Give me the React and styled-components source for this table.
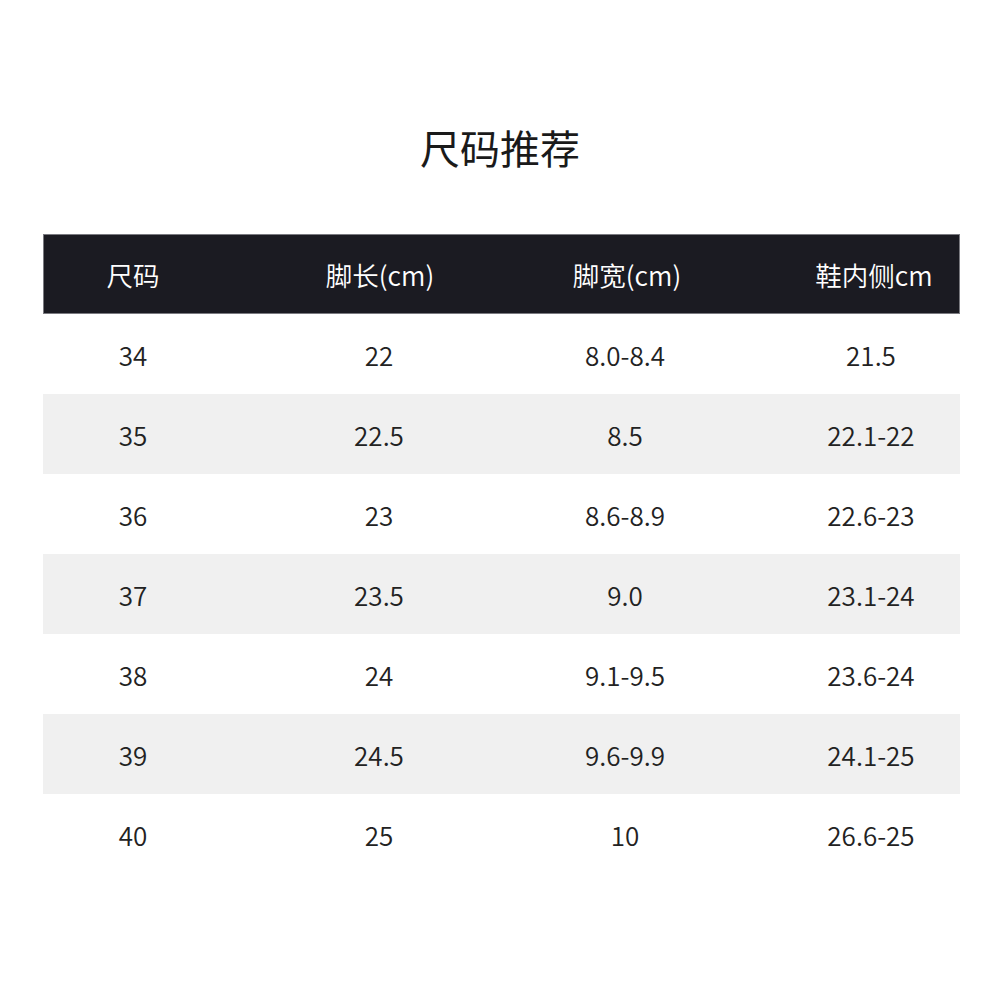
import React from "react";
import styled, { createGlobalStyle } from "styled-components";

const Global = createGlobalStyle`
  html, body { margin: 0; padding: 0; background: #fff; }
  body { font-family: "Noto Sans CJK SC", "Noto Sans", sans-serif; color: #222; }
`;

const Page = styled.div`
  width: 1000px;
  height: 1000px;
  padding-top: 117px;
  box-sizing: border-box;
`;

const Title = styled.h1`
  margin: 0 0 57px;
  font-size: 40px;
  line-height: 60px;
  font-weight: 400;
  text-align: center;
  color: #1a1a1a;
`;

const Table = styled.div`
  margin-left: 43px;
  width: 917px;
`;

const Row = styled.div`
  display: grid;
  grid-template-columns: repeat(4, 120px);
  column-gap: 126px;
  padding-left: 30px;
  height: 80px;
  align-items: center;
  box-sizing: border-box;
  background: ${(p) => (p.$shade ? "#f0f0f0" : "#fff")};
`;

const HeaderRow = styled(Row)`
  background: #1b1b22;
  border: 1px solid #7a7a80;
  color: #fff;
  padding-left: 29px;
  column-gap: 127px;
`;

const Cell = styled.div`
  text-align: center;
  white-space: nowrap;
  font-size: ${(p) => (p.$head ? "26.5px" : "26px")};
  font-weight: 350;
  justify-self: center;
  color: ${(p) => (p.$head ? "#fff" : "#222")};
`;

const head = ["尺码", "脚长(cm)", "脚宽(cm)", "鞋内侧cm"];
const rows = [
  ["34", "22", "8.0-8.4", "21.5"],
  ["35", "22.5", "8.5", "22.1-22"],
  ["36", "23", "8.6-8.9", "22.6-23"],
  ["37", "23.5", "9.0", "23.1-24"],
  ["38", "24", "9.1-9.5", "23.6-24"],
  ["39", "24.5", "9.6-9.9", "24.1-25"],
  ["40", "25", "10", "26.6-25"],
];

export default function App() {
  return (
    <Page>
      <Global />
      <Title>尺码推荐</Title>
      <Table>
        <HeaderRow>
          {head.map((h) => (
            <Cell key={h} $head>{h}</Cell>
          ))}
        </HeaderRow>
        {rows.map((r, i) => (
          <Row key={r[0]} $shade={i % 2 === 1}>
            {r.map((c, j) => (
              <Cell key={j}>{c}</Cell>
            ))}
          </Row>
        ))}
      </Table>
    </Page>
  );
}
